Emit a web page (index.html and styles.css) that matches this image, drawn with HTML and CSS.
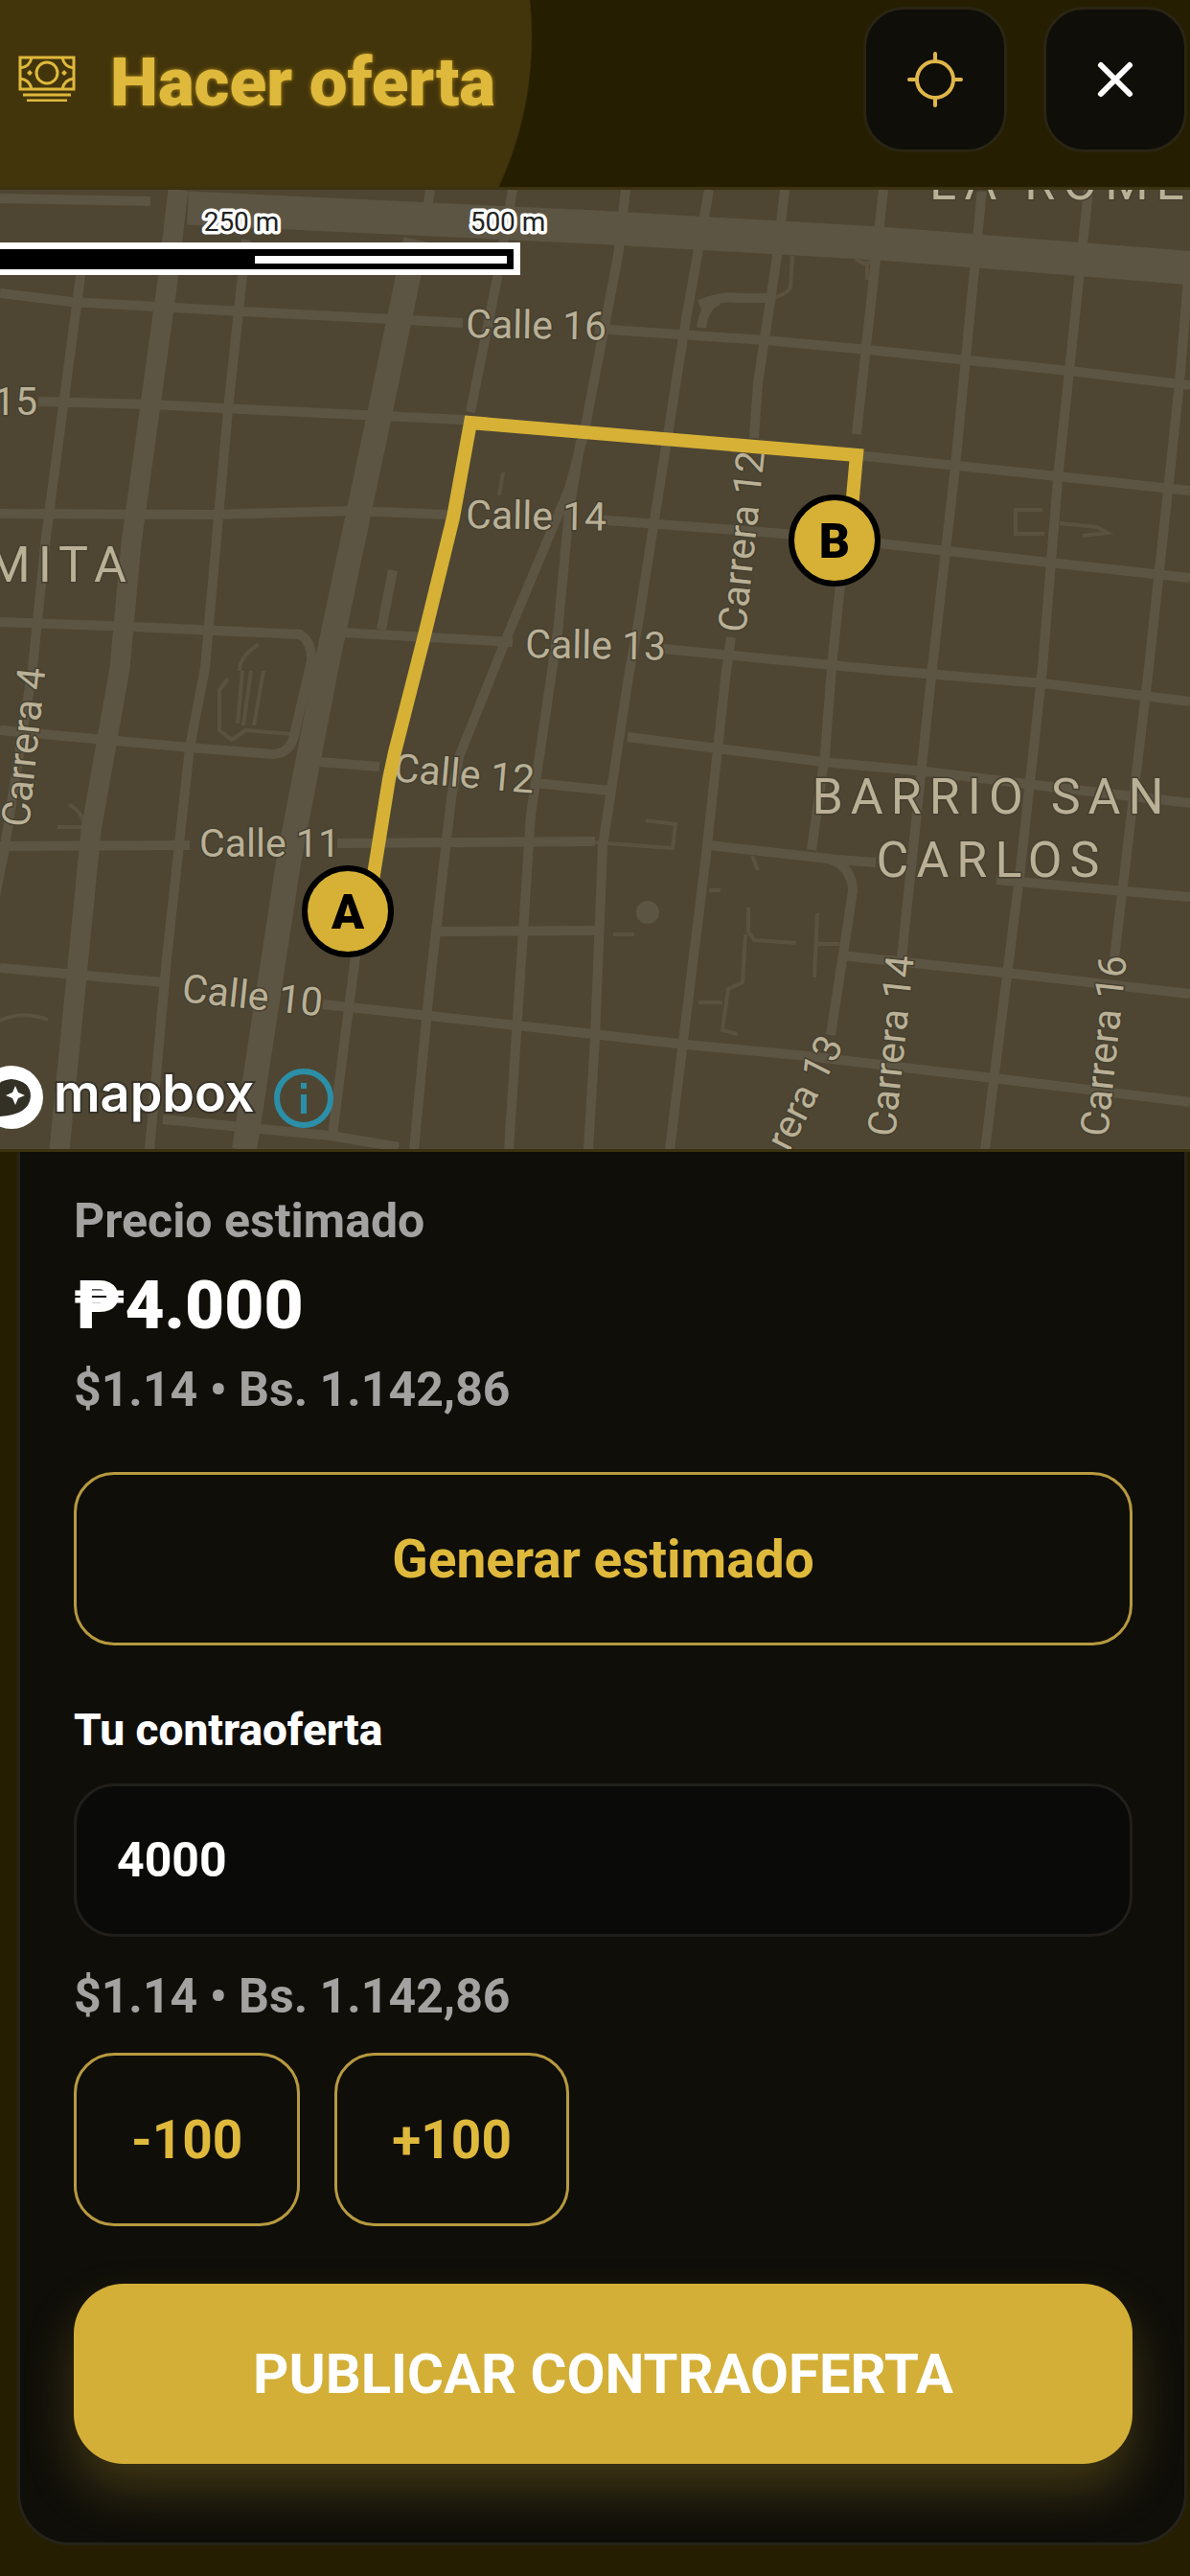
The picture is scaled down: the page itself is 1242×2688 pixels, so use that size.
FILE: index.html
```html
<!DOCTYPE html>
<html lang="es">
<head>
<meta charset="utf-8">
<meta name="viewport" content="width=device-width, initial-scale=1">
<title>Hacer oferta</title>
<link rel="stylesheet" href="styles.css">
</head>
<body>
<header class="topbar">
  <svg class="topbar-icon" viewBox="0 0 60 48" aria-hidden="true">
    <g fill="none" stroke="currentColor" stroke-width="3">
      <rect x="2" y="2" width="56" height="33"/>
      <circle cx="30" cy="18" r="11"/>
      <path d="M2 13Q12 12 14 2M46 2Q48 12 58 13M2 24Q12 25 14 35M46 35Q48 25 58 24"/>
      <path d="M5 41H55M9 47H51"/>
    </g>
    <path fill="currentColor" d="M9 18l3-3 3 3-3 3zM45 18l3-3 3 3-3 3z"/>
  </svg>
  <h1 class="topbar-title">Hacer oferta</h1>
  <div class="topbar-actions">
    <button class="icon-button icon-button-gold" type="button" aria-label="Centrar mapa">
      <svg class="icon" viewBox="0 0 60 60" fill="none" stroke="currentColor" stroke-width="4" stroke-linecap="round" aria-hidden="true">
        <circle cx="30" cy="30" r="19"/>
        <path d="M30 3v8M30 49v8M3 30h8M49 30h8"/>
      </svg>
    </button>
    <button class="icon-button" type="button" aria-label="Cerrar">
      <svg class="icon" viewBox="0 0 60 60" fill="none" stroke="currentColor" stroke-width="6" stroke-linecap="round" aria-hidden="true">
        <path d="M15 15l30 30M45 15L15 45"/>
      </svg>
    </button>
  </div>
</header>

<main>
<section class="map" aria-label="Mapa de la ruta">
<svg class="map-canvas" viewBox="0 198 1242 1001" preserveAspectRatio="xMidYMid slice">
  <!-- minor paths and buildings -->
  <g class="path">
    <path d="M238 708L229 720V762L242 772L256 762L304 766M253 700L248 755M262 700L254 757M275 700L265 757M270 672Q250 685 250 700"/>
    <path d="M60 863H88M72 840Q85 845 88 862M525 493L521 517"/>
    <path d="M827 267L825 300Q820 308 806 311M893 270Q905 280 915 268M905 275V292"/>
    <path d="M1088 532H1060V557H1090M1106 546L1145 550L1156 556L1130 559"/>
    <path d="M621 879L702 885L705 860L674 856"/>
    <path d="M785 893L791 908M740 929H752M781 947V972L787 981L831 984M778 975L775 1025L760 1032L754 1075L770 1079M754 1046H729M853 953L850 1020M853 985H876M640 975H662"/>
    <path d="M0 1065Q22 1054 50 1064"/>
  </g>
  <circle class="plaza" cx="676" cy="952" r="12"/>
  <!-- streets -->
  <g class="street">
    <path d="M0 207L157 210"/>
    <path d="M0 306L75 315L253 325L408 333L483 337M621 343L799 355L906 365L1116 387L1242 402"/>
    <path d="M40 419L158 422L253 427L483 438L894 475L1104 497L1242 512"/>
    <path d="M0 536L222 537L368 533L467 537M621 542L819 557L926 568L1104 588L1242 603"/>
    <path d="M0 649L139 654L313 662Q326 670 325 690L307 767Q303 786 285 787L198 780L0 762"/>
    <path d="M356 660L535 670M692 677L930 700L1088 713L1242 732"/>
    <path d="M333 795L396 800M558 817L637 825M655 769L859 795L966 805L1088 820L1242 838"/>
    <path d="M0 883L198 882M352 880L621 878M740 882L874 897L914 900M1040 918L1242 936"/>
    <path d="M455 972L624 971M878 997L1049 1015L1242 1037"/>
    <path d="M0 1010L170 1025M337 1048L539 1070L716 1090L843 1102L1037 1125L1242 1150"/>
    <path d="M170 1168L345 1185L416 1197"/>
    <path d="M85 280L48 560L34 697L4 890L-6 940"/>
    <path d="M257 250L238 427L214 697L198 780L174 1000L156 1200"/>
    <path d="M449 198L444 230M535 198L519 290L491 430"/>
    <path d="M653 198L645 267L610 450L594 510L531 660L515 700L479 790L471 833L448 1033L432 1200"/>
    <path d="M606 460L594 533L582 660L554 850L531 1200"/>
    <path d="M740 198L716 333L665 657L657 700L629 883L621 1083L614 1200"/>
    <path d="M730 318Q755 308 770 311H800M732 342Q735 318 750 314"/>
    <path d="M819 198L811 267L791 400L787 457M763 665L758 700L736 900L699 1200"/>
    <path d="M922 198L894 453M878 600L868 697L861 787L847 887"/>
    <path d="M1025 198L997 487L973 697L962 800L941 1000"/>
    <path d="M1136 198L1104 500L1088 697L1065 907L1028 1200"/>
    <path d="M1242 267L1231 400L1199 697L1163 1000"/>
    <path d="M865 896Q890 905 890 930L867 1080"/>
    <path d="M372 990L347 1184M410 595L398 657"/>
  </g>
  <path class="road" d="M186 198L174 300L137 567L125 697L95 867L62 1200"/>
  <path class="road road-wide" d="M434 250L396 433L341 693L301 900L255 1200"/>
  <path class="road avenue" d="M196 217L621 237L918 254L1260 281"/>
  <!-- place and street names -->
  <g class="street-name">
    <text transform="translate(486 352) rotate(1)">Calle 16</text>
    <text transform="translate(39 433)" text-anchor="end">15</text>
    <text transform="translate(486 551) rotate(1)">Calle 14</text>
    <text transform="translate(548 686) rotate(1)">Calle 13</text>
    <text transform="translate(410 815) rotate(5)">Calle 12</text>
    <text transform="translate(208 894)">Calle 11</text>
    <text transform="translate(189 1045) rotate(6)">Calle 10</text>
    <text transform="translate(30 864) rotate(-84)">Carrera 4</text>
    <text transform="translate(778 661) rotate(-84)">Carrera 12</text>
    <text transform="translate(881 1090) rotate(-63)" text-anchor="end">rera 13</text>
    <text transform="translate(934 1187) rotate(-84)">Carrera 14</text>
    <text transform="translate(1156 1187) rotate(-84)">Carrera 16</text>
  </g>
  <g class="district">
    <text x="970" y="208">LA ROME</text>
    <text x="140" y="607" text-anchor="end">MITA</text>
    <text x="1035" y="849" text-anchor="middle">BARRIO SAN</text>
    <text x="1035" y="915" text-anchor="middle">CARLOS</text>
  </g>
  <!-- route with its two ends -->
  <path class="route" d="M388 925L406 813L412 785L443 663L473 540L491 441L894 475L889 530"/>
  <g class="pin">
    <circle cx="363" cy="951" r="45"/>
    <text x="363" y="969">A</text>
    <circle cx="871" cy="564" r="45"/>
    <text x="871" y="582">B</text>
  </g>
  <!-- scale bar -->
  <g class="scale">
    <text x="252" y="241">250 m</text>
    <text x="530" y="241">500 m</text>
    <path fill="#fff" d="M0 253H543V287H0z"/>
    <path fill="#000" d="M0 260H536V281H0z"/>
    <path fill="#fff" d="M266 267H529V275H266z"/>
  </g>
  <!-- attribution -->
  <circle cx="12" cy="1145" r="33" fill="#fff"/>
  <path fill="#333026" d="M-8 1165Q-14 1128 12 1126Q32 1128 32 1144Q30 1166 -8 1165z"/>
  <path fill="#fff" d="M16 1133l3 7 7 3-7 3-3 7-3-7-7-3 7-3z"/>
  <text class="brand" x="56" y="1160">mapbox</text>
  <g fill="none" stroke="#2c8fa8" stroke-width="6">
    <circle cx="317" cy="1146" r="28"/>
    <path d="M317 1142V1162M317 1130V1136"/>
  </g>
</svg>
</section>

<form class="card">
  <section class="estimate">
    <h2 class="muted">Precio estimado</h2>
    <p class="price">₱4.000</p>
    <p class="muted">$1.14 • Bs. 1.142,86</p>
  </section>
  <button class="outline-button generate" type="button">Generar estimado</button>
  <label class="field-label" for="offer">Tu contraoferta</label>
  <input class="field" id="offer" type="text" inputmode="numeric" value="4000">
  <p class="muted converted">$1.14 • Bs. 1.142,86</p>
  <div class="steps">
    <button class="outline-button" type="button">-100</button>
    <button class="outline-button" type="button">+100</button>
  </div>
  <button class="publish" type="submit">PUBLICAR CONTRAOFERTA</button>
</form>
</main>
</body>
</html>
```
FILE: styles.css
```css
* {
  box-sizing: border-box;
}

body {
  margin: 0;
  background: #251e00;
  color: #fff;
  font-family: Roboto, "Liberation Sans", sans-serif;
  font-weight: 700;
}

h1, h2, p {
  margin: 0;
}

button, input {
  font: inherit;
}

/* Header */
.topbar {
  display: flex;
  align-items: flex-start;
  gap: 36px;
  height: 195px;
  padding: 7px 3px 0 19px;
  background: radial-gradient(circle at 185px 39px, #43350b 369px, #251e00 371px);
  color: #dfb93c;
}

.topbar-icon {
  width: 60px;
  height: 48px;
  margin-top: 51px;
  flex: none;
}

.topbar-title {
  margin-top: 37px;
  font-size: 71px;
  font-weight: 900;
  line-height: 84px;
  text-shadow: 0 0 4px #b08c1c;
}

.topbar-actions {
  display: flex;
  gap: 38px;
  margin-left: auto;
}

.icon-button {
  display: flex;
  align-items: center;
  justify-content: center;
  width: 150px;
  height: 152px;
  padding: 0;
  border: 3px solid #2a2513;
  border-radius: 42px;
  background: #0f0e09;
  color: #fff;
}

.icon-button-gold {
  color: #dfb648;
}

.icon {
  width: 60px;
  height: 60px;
}

/* Map */
.map {
  height: 1007px;
  border: solid #3b3211;
  border-width: 3px 0;
  background: #4e4633;
}

.map-canvas {
  display: block;
  width: 100%;
  height: 100%;
}

.street, .road, .path {
  fill: none;
  stroke: #5d5543;
  stroke-width: 10px;
}

.path {
  stroke: #5a523f;
  stroke-width: 4px;
}

.plaza {
  fill: #5d5543;
}

.road {
  stroke-width: 21px;
}

.road-wide {
  stroke-width: 26px;
}

.avenue {
  stroke-width: 35px;
}

.street-name, .district {
  fill: #b9b096;
  stroke: #464030;
  stroke-width: 3px;
  paint-order: stroke;
  font-weight: 400;
}

.street-name {
  font-size: 41px;
}

.district {
  font-size: 52px;
  letter-spacing: 8px;
}

.route {
  fill: none;
  stroke: #d6b136;
  stroke-width: 14px;
}

.pin circle {
  fill: #d6b136;
  stroke: #000;
  stroke-width: 6px;
}

.pin text {
  fill: #000;
  font-size: 50px;
  font-weight: 900;
  text-anchor: middle;
}

.scale text {
  fill: #222;
  stroke: #fff;
  stroke-width: 7px;
  stroke-linejoin: round;
  paint-order: stroke;
  font-size: 28px;
  font-weight: 400;
  text-anchor: middle;
}

.brand {
  fill: #fff;
  stroke: #38342a;
  stroke-width: 4px;
  paint-order: stroke;
  font-family: Inter, Roboto, sans-serif;
  font-size: 54px;
  font-weight: 600;
}

/* Offer card */
.card {
  display: flex;
  flex-direction: column;
  margin: 0 3px 32px 18px;
  padding: 42px 54px 82px 56px;
  border: 3px solid #26231a;
  border-top: 0;
  border-radius: 0 0 54px 54px;
  background: #0f0e09;
}

.estimate {
  display: flex;
  flex-direction: column;
  gap: 16px;
}

.muted {
  color: #a3a2a0;
  font-size: 50px;
  line-height: 60px;
}

.price {
  font-size: 71px;
  font-weight: 900;
  line-height: 84px;
}

.outline-button {
  height: 181px;
  padding: 0 57px;
  border: 3px solid #b79a40;
  border-radius: 42px;
  background: none;
  color: #dfb93c;
  font-size: 55px;
}

.generate {
  margin-top: 56px;
}

.field-label {
  margin-top: 60px;
  font-size: 46px;
  font-weight: 800;
  line-height: 56px;
}

.field {
  width: 100%;
  height: 160px;
  margin-top: 28px;
  padding: 0 42px;
  border: 3px solid #201f1b;
  border-radius: 42px;
  background: #0a0a08;
  color: #fff;
  font-size: 50px;
}

.converted {
  margin-top: 32px;
}

.steps {
  display: flex;
  gap: 36px;
  margin-top: 29px;
}

.publish {
  height: 188px;
  margin-top: 60px;
  padding: 0;
  border: 0;
  border-radius: 52px;
  background: #d3af37;
  box-shadow: 0 28px 52px rgba(212, 175, 55, 0.25);
  color: #fff;
  font-size: 58px;
}
```
